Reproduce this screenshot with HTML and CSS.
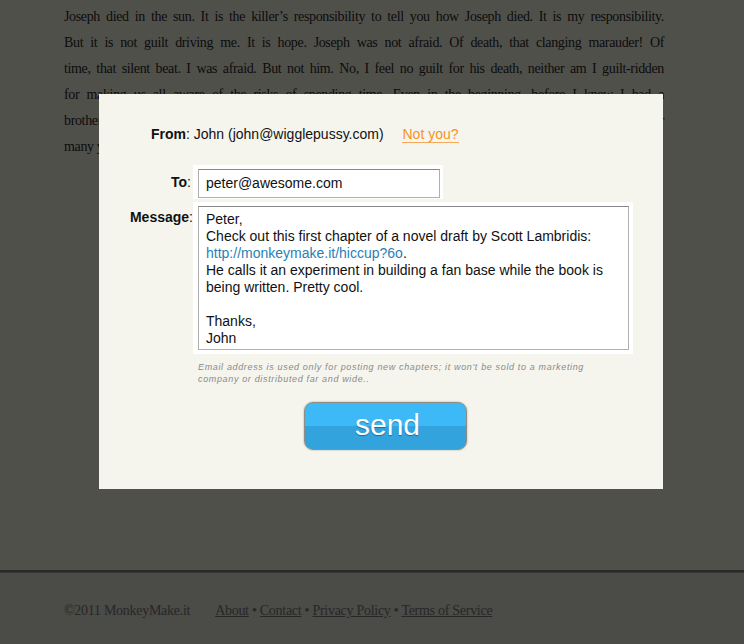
FILE: index.html
```html
<!DOCTYPE html>
<html>
<head>
<meta charset="utf-8">
<link rel="stylesheet" href="styles.css">
</head>
<body>
<div class="page">
  <main class="story">
    <p class="prose">
      <span class="ln">Joseph died in the sun. It is the killer’s responsibility to tell you how Joseph died. It is my responsibility.</span>
      <span class="ln">But it is not guilt driving me. It is hope. Joseph was not afraid. Of death, that clanging marauder! Of</span>
      <span class="ln">time, that silent beat. I was afraid. But not him. No, I feel no guilt for his death, neither am I guilt-ridden</span>
      <span class="ln">for making us all aware of the risks of spending time. Even in the beginning, before I knew I had a</span>
      <span class="ln">brother, I knew that time was a thing to be spent with care, like money, or like love. I knew it for</span>
      <span class="ln">many years.</span>
    </p>
  </main>
  <footer class="footer">
    <span class="copy">©2011 MonkeyMake.it</span>
    <nav class="links"><a href="#">About</a> • <a href="#">Contact</a> • <a href="#">Privacy Policy</a> • <a href="#">Terms of Service</a></nav>
  </footer>
</div>

<div class="overlay"></div>

<div class="modal">
  <div class="from-row"><b>From</b>: John (john@wigglepussy.com) <a class="notyou" href="#">Not you?</a></div>
  <div class="form">
    <label class="lbl lbl-to"><b>To</b>:</label>
    <div class="field field-to"><div class="box box-to">peter@awesome.com</div></div>
    <label class="lbl lbl-msg"><b>Message</b>:</label>
    <div class="field field-msg">
      <div class="box box-msg">Peter,<br>Check out this first chapter of a novel draft by Scott Lambridis:<br><span class="url">http://monkeymake.it/hiccup?6o</span>.<br>He calls it an experiment in building a fan base while the book is being written. Pretty cool.<br><br>Thanks,<br>John</div>
    </div>
    <div></div>
    <p class="note">Email address is used only for posting new chapters; it won't be sold to a marketing company or distributed far and wide..</p>
  </div>
  <div class="actions"><button class="send">send</button></div>
</div>
</body>
</html>
```
FILE: styles.css
```css
html, body {
  margin: 0;
  padding: 0;
}
body {
  background: #e3e3da;
  height: 644px;
  overflow: hidden;
}
.page {
  display: flex;
  flex-direction: column;
  min-height: 644px;
}
.story {
  background: #f2f2e3;
  height: 570px;
  padding: 4px 0 0 64px;
  box-sizing: border-box;
}
.prose {
  margin: 0;
  width: 600px;
  font-family: "Liberation Serif", "Times New Roman", serif;
  font-size: 14px;
  letter-spacing: -0.35px;
  line-height: 26px;
  color: #2a2a2a;
}
.ln {
  display: block;
  text-align: justify;
  text-align-last: justify;
  white-space: nowrap;
}
.ln:last-child {
  text-align-last: left;
}
.footer {
  flex: 1;
  border-top: 2px solid #808080;
  box-shadow: inset 0 1px 0 #a8a8a0;
  background: #e3e3da;
  padding: 31px 0 0 64px;
  font-family: "Liberation Serif", "Times New Roman", serif;
  font-size: 14px;
  letter-spacing: -0.28px;
  color: #777;
  display: flex;
  gap: 25px;
}
.links a {
  color: #777;
  text-decoration: underline;
}
.overlay {
  position: fixed;
  inset: 0;
  background: rgba(0, 0, 0, 0.67);
}
.modal {
  position: fixed;
  left: 99px;
  top: 94px;
  width: 564px;
  height: 395px;
  box-sizing: border-box;
  background: #f5f5ee;
  font-family: "Liberation Sans", Arial, sans-serif;
  font-size: 14px;
  color: #111;
  padding: 31px 0 0 0;
}
.from-row {
  padding-left: 52px;
  line-height: 18px;
}
.notyou {
  color: #f7931e;
  margin-left: 15px;
  text-decoration: none;
  border-bottom: 1px solid #f5a85a;
}
.form {
  display: grid;
  grid-template-columns: 94px auto;
  column-gap: 0;
  row-gap: 3px;
  margin-top: 22px;
  justify-items: start;
}
.lbl {
  justify-self: end;
}
.lbl-to {
  padding-top: 9px;
  padding-right: 2px;
}
.lbl-msg {
  padding-top: 7px;
  padding-right: 0;
}
.field {
  background: #fff;
  padding: 4px 3px 1px 5px;
}
.field-msg {
  padding: 4px 4px 4px 5px;
}
.box {
  border: 1px solid #b0b0b0;
  border-top-color: #888;
  background: #fff;
  box-sizing: border-box;
}
.box-to {
  width: 242px;
  height: 29px;
  padding: 5px 7px;
  line-height: 17px;
}
.box-msg {
  width: 431px;
  height: 144px;
  padding: 4px 7px 2px;
  line-height: 17px;
}
.url {
  color: #2a7fb5;
}
.note {
  margin: 4px 0 0 5px;
  width: 420px;
  font-size: 9px;
  font-style: italic;
  letter-spacing: 0.65px;
  line-height: 12px;
  color: #8a8a8a;
}
.actions {
  display: flex;
  justify-content: center;
  margin-top: 17px;
  padding-left: 9px;
}
.send {
  width: 163px;
  height: 48px;
  border: 1px solid #8e8e84;
  border-radius: 9px;
  background: linear-gradient(#3db9f7 0, #3db9f7 50%, #33a3de 50%, #33a3de 100%);
  box-shadow: 0 0 2px rgba(0, 0, 0, 0.35);
  color: #fff;
  font-family: "Liberation Sans", Arial, sans-serif;
  font-size: 30px;
  line-height: 30px;
  padding: 0 0 2px 4px;
  text-shadow: 0 1px 1px rgba(0, 0, 0, 0.35);
}
```
